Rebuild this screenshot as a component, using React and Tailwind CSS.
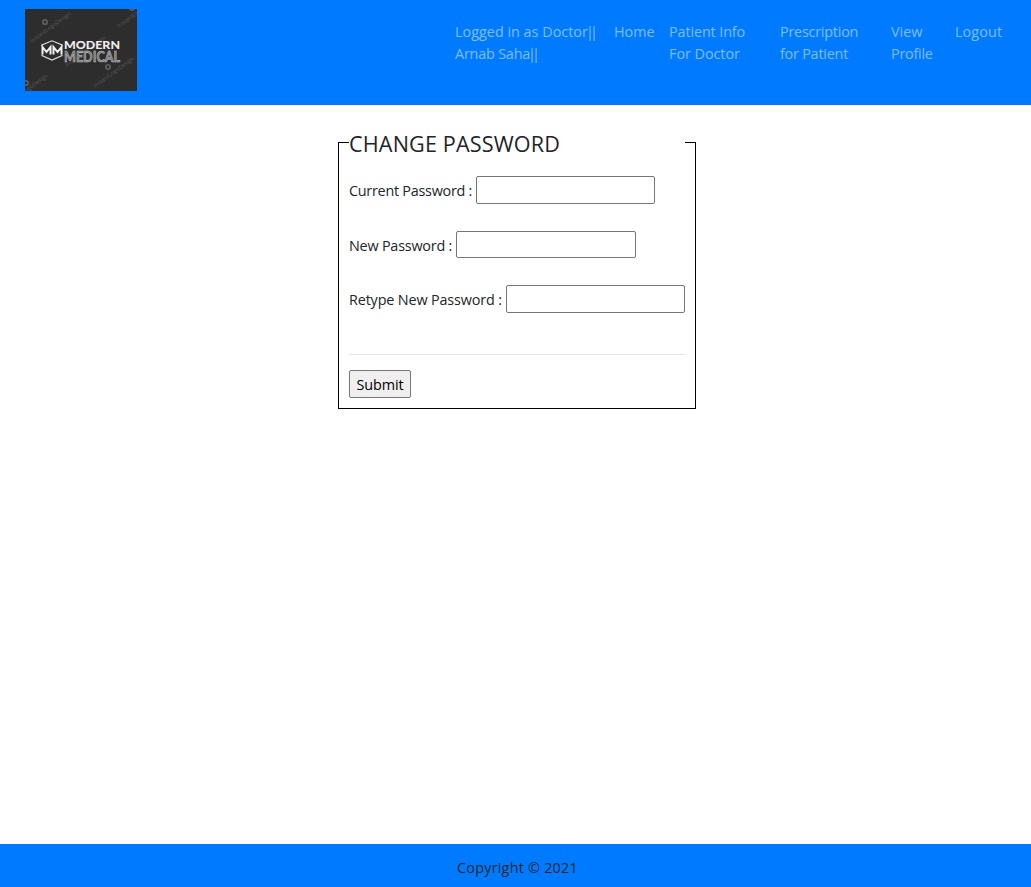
const links = [
  { lines: [['Logged in as Doctor', true], ['Arnab Saha', true]], width: 'w-[159px]', tracks: ['tracking-[0px]', 'tracking-[-0.2px]'] },
  { lines: [['Home']], width: 'w-[55px]', tracks: ['tracking-[0px]'] },
  { lines: [['Patient Info'], ['For Doctor']], width: 'w-[111px]', tracks: ['tracking-[-0.12px]', 'tracking-[-0.05px]'] },
  { lines: [['Prescription'], ['for Patient']], width: 'w-[111px]', tracks: ['tracking-[-0.23px]', 'tracking-[-0.23px]'] },
  { lines: [['View'], ['Profile']], width: 'w-[64px]', tracks: ['tracking-[0px]', 'tracking-[-0.25px]'] },
  { lines: [['Logout']], width: 'w-[76px]', tracks: ['tracking-[0.1px]'] },
];

const fields = [
  { id: 'current', label: 'Current Password :', width: 'w-[127px]', track: 'tracking-[-0.26px]', input: 'h-7 w-[179px]', row: 'h-[55px]' },
  { id: 'new', label: 'New Password :', width: 'w-[107px]', track: 'tracking-[-0.22px]', input: 'h-[27px] w-[180px]', row: 'h-[54px]' },
  { id: 'retype', label: 'Retype New Password :', width: 'w-[157px]', track: 'tracking-[-0.16px]', input: 'h-7 w-[179px]', row: 'h-[69px]' },
];

function Logo() {
  const marks = [[20, 13], [83, 58], [1, 74], [107, -1]];
  return (
    <svg className="h-[82px] w-28 shrink-0" viewBox="0 0 112 82" role="img">
      <rect width="112" height="82" fill="#2d2d2d" />
      <g fill="none" stroke="#5c5c5c" strokeWidth="1.8">
        {marks.map(([x, y]) => <circle key={x} cx={x} cy={y} r="2.2" />)}
      </g>
      <g fill="#5a5a5a" fontFamily="Open Sans, sans-serif" fontSize="5.6">
        <text transform="translate(7 34) rotate(-36)">InstantLogoDesign</text>
        <text transform="translate(94 19) rotate(-36)">InstantLogoDesign</text>
        <text transform="translate(70 79) rotate(-36)">InstantLogoDesign</text>
        <text transform="translate(-16 96) rotate(-36)">InstantLogoDesign</text>
        <text transform="translate(42 58) rotate(-36)">InstantLogoDesign</text>
      </g>
      <path d="M17 37V36L27 31.8L37 36V37M17 45.5V46.5L27 51L37 46.5V45.5" fill="none" stroke="#d8d8d8" strokeWidth="1.2" />
      <path d="M17.5 45.5V38L21.5 43L25.5 38V45.5M28.5 45.5V38L32.5 43L36.5 38V45.5" fill="none" stroke="#f1f1f1" strokeWidth="2" />
      <text x="39" y="39.5" textLength="56" lengthAdjust="spacingAndGlyphs" fill="#eeeeee" fontFamily="Lato, sans-serif" fontWeight="900" fontSize="12">MODERN</text>
      <text x="39" y="52.5" textLength="56" lengthAdjust="spacingAndGlyphs" fill="#707070" stroke="#c8c8c8" strokeWidth="0.55" fontFamily="Lato, sans-serif" fontWeight="700" fontSize="15">MEDICAL</text>
    </svg>
  );
}

export default function App() {
  return (
    <div className="flex min-h-[887px] flex-col bg-white font-['Open_Sans',sans-serif] text-[14.4px] text-[#212529]">
      <header className="flex h-[105px] items-start justify-between bg-[#007bff] pt-[9px] pl-[25px]">
        <Logo />
        <nav className="flex pt-3 leading-[22px] text-[#80bdff]">
          {links.map((link) => (
            <a key={link.lines[0][0]} href="#" className={`${link.width} shrink-0 whitespace-nowrap`}>
              {link.lines.map(([line, bars], i) => (
                <span key={line} className="block">
                  <span className={link.tracks[i]}>{line}</span>
                  {bars && <span className="-ml-[2px] tracking-[-3.9px]">||</span>}
                </span>
              ))}
            </a>
          ))}
        </nav>
      </header>
      <main className="flex grow justify-center pt-[26px] pl-[3px]">
        <form className="w-[358px]" onSubmit={(e) => e.preventDefault()}>
          <fieldset className="h-[278px] min-w-0 border border-black px-[10px]">
            <legend className="h-[22px] w-full text-[21.6px] leading-[26px] whitespace-nowrap"><span className="tracking-[0.15px]">CHANGE PASSWORD</span></legend>
            <div className="pt-[23px]">
              {fields.map((field) => (
                <div key={field.id} className={`${field.row} flex items-start`}>
                  <label htmlFor={field.id} className={`${field.width} shrink-0 leading-[30px] whitespace-nowrap`}><span className={field.track}>{field.label}</span></label>
                  <input id={field.id} type="password" className={`${field.input} shrink-0 rounded-[2px] border border-[#767676] bg-white`} />
                </div>
              ))}
              <hr className="border-[#e5e5e5]" />
              <button type="submit" className="mt-[15px] h-7 w-[62px] rounded-[2px] border border-[#767676] bg-[#efefef] pt-[2px] text-black"><span className="tracking-[-0.1px]">Submit</span></button>
            </div>
          </fieldset>
        </form>
      </main>
      <footer className="flex h-[43px] items-center justify-center bg-[#007bff] pt-1 pl-1"><span className="tracking-[0.22px]">Copyright © 2021</span></footer>
    </div>
  );
}
